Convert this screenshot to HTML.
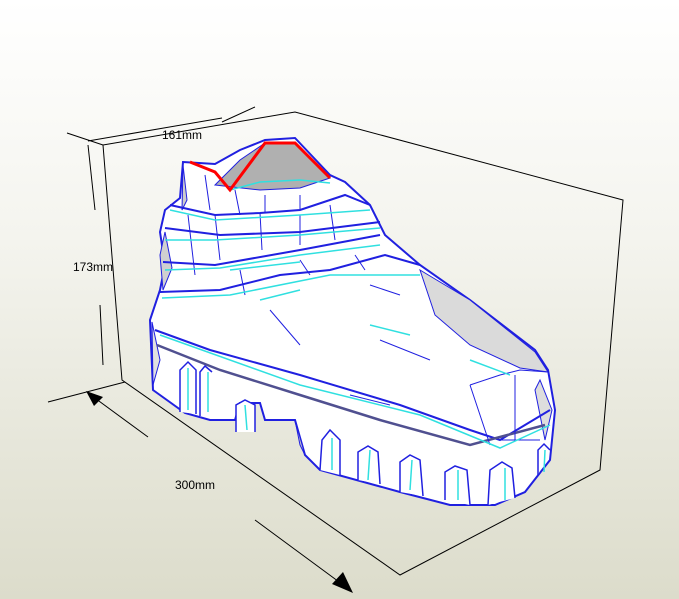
<!DOCTYPE html>
<html><head><style>
html,body{margin:0;padding:0;width:679px;height:599px;overflow:hidden;background:linear-gradient(#ffffff 0%,#f4f4ee 40%,#dcdccb 100%);font-family:"Liberation Sans",sans-serif;}
svg{position:absolute;left:0;top:0}
</style></head><body>
<svg width="679" height="599" viewBox="0 0 679 599">
<g stroke="#000" stroke-width="1" fill="none">
<path d="M103,145L295,112L623,200L600,470L400,575L122,380Z"/>
<path d="M67,133L103,145M222,122L255,107M88,141L222,118"/>
<path d="M48,402L125,382M255,520L350,590M88,393L148,437"/>
<path d="M88,145L95,210M100,305L103,365"/>
</g>
<polygon points="86,391 103,397 94,406" fill="#000"/>
<polygon points="353,593 332,584 343,572" fill="#000"/>
<path d="M183,162L215,164L240,150L265,140L295,138L330,175L345,182L370,205L385,235L420,265L470,300L535,350L548,370L555,410L550,460L525,492L495,505L450,505L400,492L320,470L305,455L295,420L265,420L260,403L240,403L235,420L210,420L185,413L153,390L150,320L160,290L165,265L160,232L165,210L180,198Z" fill="#fff" stroke="#2020e0" stroke-width="2"/>
<g stroke="#2020e0" stroke-width="1">
<path d="M215,185L240,160L265,143L295,143L330,178L300,188L260,190Z" fill="#b0b0b0"/>
<path d="M183,165L187,200L182,210Z" fill="#ccc"/>
<path d="M420,270L470,300L535,352L548,372L520,368L470,345L435,315Z" fill="#dadada"/>
<path d="M165,232L172,268L163,290L160,255Z" fill="#d0d0d0"/>
<path d="M152,322L160,360L153,385Z" fill="#e0e0e0"/>
<path d="M540,380L552,410L545,440L535,390Z" fill="#ddd"/>
<path d="M295,420L305,455L300,445Z" fill="#ccc"/>
</g>
<g fill="none" stroke="#2020e0" stroke-width="2">
<path d="M170,205L215,215L260,213L300,210L345,195L370,205"/>
<path d="M165,228L220,235L300,232L380,222"/>
<path d="M163,262L215,265L300,250L380,235"/>
<path d="M160,292L220,290L280,275L330,270L385,255L420,265"/>
<path d="M155,330L210,350L300,375L400,405L470,430L500,440L550,410"/>
<path d="M157,345L220,370L300,395L380,420L470,445L545,425" stroke="#505090" stroke-width="2.5"/>
</g>
<g fill="none" stroke="#2020e0" stroke-width="1">
<path d="M470,385L500,375L520,370L548,372M490,445L470,385M515,375L515,440M500,440L540,440"/>
<path d="M188,215L195,275M215,215L220,260M260,213L262,250M300,215L300,245M330,205L335,240M240,270L245,295M300,260L310,275M355,255L365,270"/>
<path d="M270,310L300,345M380,340L430,360M350,395L390,405M370,285L400,295"/>
<path d="M205,175L210,210M235,190L240,215M265,195L265,212M300,195L300,210"/>
</g>
<g fill="none" stroke="#30e0e0" stroke-width="1.5">
<path d="M170,210L215,220L300,215L370,210"/>
<path d="M165,240L215,240L300,235L380,228"/>
<path d="M165,270L220,268L300,255L380,245"/>
<path d="M162,298L230,295L330,275L420,275"/>
<path d="M160,335L300,385L420,415L500,448L550,425"/>
<path d="M230,190L260,182L300,180L330,183"/>
<path d="M260,300L300,290M230,270L300,262M370,325L410,335M470,360L510,375"/>
</g>
<g fill="#fff" stroke="#2020e0" stroke-width="1.5">
<path d="M180,412L180,370L188,362L196,370L196,414"/>
<path d="M200,416L200,372L205,366L212,372"/>
<path d="M236,432L236,405L245,400L255,405L255,432"/>
<path d="M320,470L322,440L330,430L340,440L340,475"/>
<path d="M358,480L358,452L368,446L378,452L380,484"/>
<path d="M400,492L400,462L410,455L420,460L423,496"/>
<path d="M445,500L445,472L455,466L467,470L470,505"/>
<path d="M488,505L490,470L502,462L512,468L515,498"/>
<path d="M538,475L538,450L544,444L550,450"/>
</g>
<g fill="none" stroke="#30e0e0" stroke-width="1.5">
<path d="M188,368L188,410M208,372L208,412M245,405L247,430M332,438L332,470M370,450L368,480M412,460L410,490M458,470L458,500M505,468L505,500M545,450L544,472"/>
</g>
<path d="M190,162L215,172L230,190L265,143L295,143L330,178" fill="none" stroke="#f00" stroke-width="3"/>
<text x="162" y="139" font-size="12" fill="#000">161mm</text>
<text x="73" y="271" font-size="12" fill="#000">173mm</text>
<text x="175" y="489" font-size="12" fill="#000">300mm</text>
</svg>
</body></html>
